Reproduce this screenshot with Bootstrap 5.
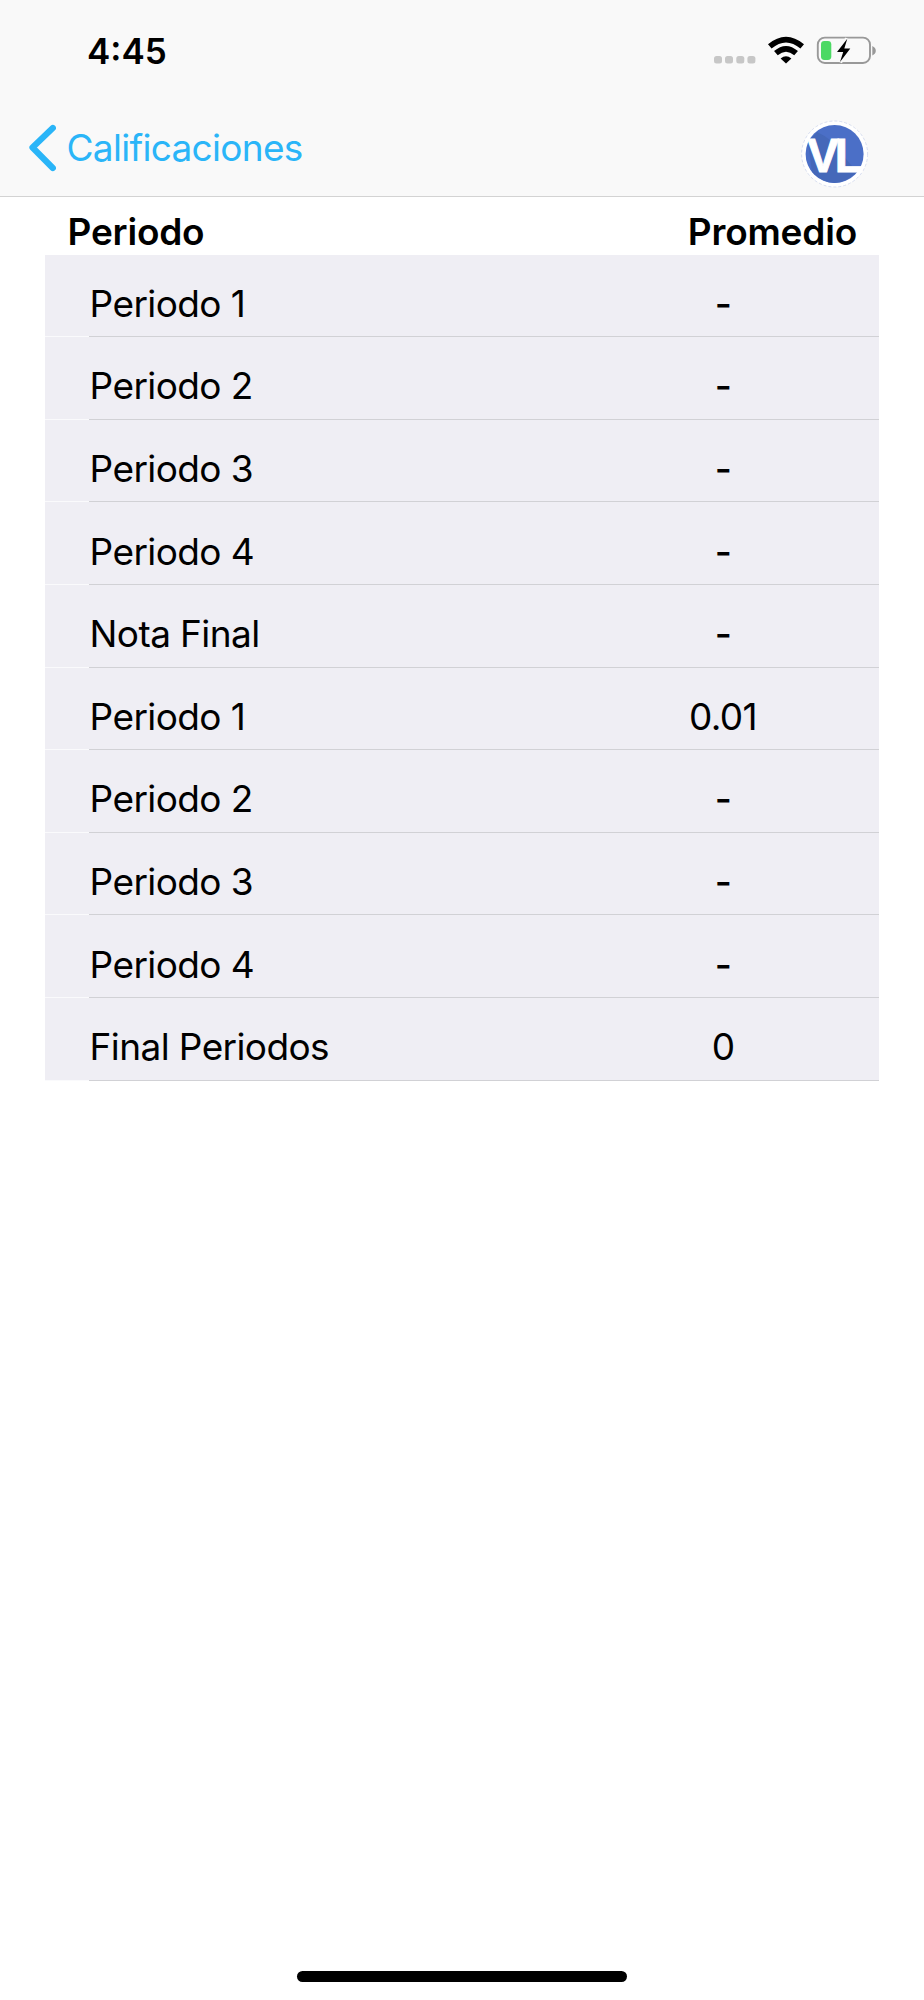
<!DOCTYPE html>
<html lang="es">
<head>
<meta charset="utf-8">
<meta name="viewport" content="width=device-width, initial-scale=1">
<title>Calificaciones</title>
<link href="https://cdn.jsdelivr.net/npm/bootstrap@5.3.0/dist/css/bootstrap.min.css" rel="stylesheet">
<style>
  body { font-family: Inter, "Liberation Sans", sans-serif; font-size: 37px; line-height: 50px; color: #000; background: #fff; }
  .screen { height: 2000px; overflow: hidden; }
  .top-area { height: 197px; background: #f9f9f9; border-bottom: 1px solid #d3d3d3; }
  .clock { font-size: 35px; font-weight: 600; line-height: 50px; padding: 26px 0 0 87px; letter-spacing: 0; }
  .status-icons { width: 170px; height: 40px; margin: 30px 44px 0 0; }
  .status-line { height: 105px; }
  .back-link { color: #2ab5f8; padding: 18px 0 0 28px; letter-spacing: -.7px; }
  .back-link:hover { color: #2ab5f8; }
  .back-link span { margin-left: 10.5px; }
  .chevron { width: 28px; height: 50px; }
  .logo { width: 70px; height: 70px; margin: 14px 55px 0 0; }
  .logo text { font: 700 48.5px "Liberation Sans", sans-serif; letter-spacing: -4px; }
  .heads { height: 57.7px; padding: 9.5px 67px 0 67.5px; font-weight: 600; letter-spacing: -.2px; }
  .periods { margin: 0 45px; }
  .period { height: 82.6px; background: linear-gradient(#d1d1d5, #d1d1d5) 44px 100% / 100% 1px no-repeat, linear-gradient(#fafafc, #fafafc) 0 100% / 100% 1px no-repeat, #efeef4; padding: 24.2px 0 0 44.6px; letter-spacing: -.6px; }
  .score { width: 312px; }
  .dash { font-weight: 500; }
  .home-bar { width: 330px; height: 11px; border-radius: 6px; background: #000; margin-bottom: 18px; }
</style>
</head>
<body>
<div class="screen d-flex flex-column">
  <header class="top-area flex-shrink-0">
    <div class="status-line d-flex justify-content-between align-items-start">
      <div class="clock">4:45</div>
      <svg class="status-icons" viewBox="710 30 170 40">
        <g fill="#c7c7c7"><rect x="714" y="56" width="8" height="7.5" rx="2.5"/><rect x="725" y="56" width="8" height="7.5" rx="2.5"/><rect x="736.3" y="56" width="8" height="7.5" rx="2.5"/><rect x="747.4" y="56" width="8" height="7.5" rx="2.5"/></g>
        <g fill="none" stroke="#000" stroke-width="5.6"><path d="M769.8 46.3Q786 32.8 802.2 46.3"/><path d="M775.9 53.2Q786 44.4 796.1 53.2"/></g>
        <path d="M780.6 58.5Q786 53.8 791.4 58.5L786 63.5Z"/>
        <rect x="817.8" y="37.6" width="52.2" height="25.4" rx="7" fill="none" stroke="#999" stroke-width="1.9"/>
        <path d="M872.3 46v9.4q3.5-1.6 3.5-4.7t-3.5-4.7Z" fill="#999"/>
        <rect x="821" y="41" width="10.3" height="19" rx="3.4" fill="#4cd964"/>
        <path d="M847.3 38.8L837 51.9H843.2L840 62L850.3 48.5H844.3Z" fill="#000" stroke="#f9f9f9" stroke-width="4.5" paint-order="stroke"/>
      </svg>
    </div>
    <div class="d-flex justify-content-between align-items-start">
      <a href="#" class="back-link d-flex align-items-center text-decoration-none">
        <svg class="chevron" viewBox="0 0 28 50" fill="none" stroke="currentColor" stroke-width="6.2" stroke-linecap="round"><path d="M24.8 5L4.5 24.5L24.8 45" stroke-linejoin="round"/></svg>
        <span>Calificaciones</span>
      </a>
      <svg class="logo" viewBox="0 0 70 70">
        <circle cx="35.6" cy="35" r="33" fill="#fff" stroke="#cfd7ee" stroke-width=".8" stroke-dasharray="3 2"/>
        <circle cx="35.6" cy="35" r="29" fill="#4b6fc7"/>
        <path d="M9 23L18 13Q34 20 42 34L58 53Q35 75 13 53Z" fill="#4568b9"/>
        <text transform="translate(8.3 53) scale(.97 1)" fill="#fff" stroke="#fff" stroke-width="1">VL</text>
      </svg>
    </div>
  </header>
  <main>
    <div class="heads d-flex justify-content-between"><span>Periodo</span><span>Promedio</span></div>
    <div class="periods">
      <div class="period d-flex justify-content-between"><span>Periodo 1</span><span class="score dash text-center">-</span></div>
      <div class="period d-flex justify-content-between"><span>Periodo 2</span><span class="score dash text-center">-</span></div>
      <div class="period d-flex justify-content-between"><span>Periodo 3</span><span class="score dash text-center">-</span></div>
      <div class="period d-flex justify-content-between"><span>Periodo 4</span><span class="score dash text-center">-</span></div>
      <div class="period d-flex justify-content-between"><span>Nota Final</span><span class="score dash text-center">-</span></div>
      <div class="period d-flex justify-content-between"><span>Periodo 1</span><span class="score text-center">0.01</span></div>
      <div class="period d-flex justify-content-between"><span>Periodo 2</span><span class="score dash text-center">-</span></div>
      <div class="period d-flex justify-content-between"><span>Periodo 3</span><span class="score dash text-center">-</span></div>
      <div class="period d-flex justify-content-between"><span>Periodo 4</span><span class="score dash text-center">-</span></div>
      <div class="period d-flex justify-content-between"><span>Final Periodos</span><span class="score text-center">0</span></div>
    </div>
  </main>
  <div class="home-bar mt-auto mx-auto flex-shrink-0"></div>
</div>
<script src="https://cdn.jsdelivr.net/npm/bootstrap@5.3.0/dist/js/bootstrap.bundle.min.js"></script>
</body>
</html>
